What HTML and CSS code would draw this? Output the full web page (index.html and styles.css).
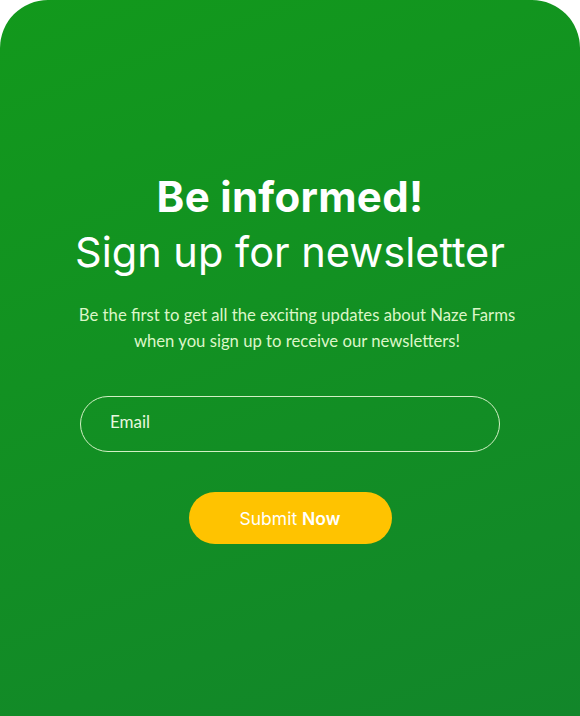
FILE: index.html
```html
<!DOCTYPE html>
<html lang="en">
<head>
<meta charset="utf-8">
<title>Newsletter</title>
<link rel="stylesheet" href="styles.css">
</head>
<body>
<section class="card">
  <h2 class="title"><strong>Be informed!</strong><span class="sub">Sign up for newsletter</span></h2>
  <p class="lead">Be the first to get all the exciting updates about Naze Farms when you sign up to receive our newsletters!</p>
  <form class="form">
    <input class="email" type="email" placeholder="Email">
    <button class="submit" type="button">Submit <b>Now</b></button>
  </form>
</section>
</body>
</html>
```

FILE: styles.css
```css
html, body {
  margin: 0;
  padding: 0;
  background: #ffffff;
}
body {
  overflow: hidden;
}
.card {
  box-sizing: border-box;
  width: 580px;
  height: 716px;
  border-radius: 48px 48px 0 0;
  background: linear-gradient(160deg, #12991c 0%, #12862a 100%);
  display: flex;
  flex-direction: column;
  align-items: center;
  padding-top: 172px;
}
.title {
  margin: 0;
  display: flex;
  flex-direction: column;
  align-items: center;
  color: #ffffff;
  font-family: Inter, "Noto Sans", sans-serif;
  font-weight: 400;
}
.title strong {
  font-size: 42px;
  line-height: 50px;
  font-weight: 700;
  letter-spacing: 0.3px;
}
.title .sub {
  font-size: 41.5px;
  line-height: 60px;
}
.lead {
  margin: 20px 0 0 14px;
  width: 470px;
  text-align: center;
  color: #dcf6c8;
  font-family: Lato, sans-serif;
  font-size: 16.7px;
  line-height: 26px;
}
.form {
  margin-top: 42px;
  display: flex;
  flex-direction: column;
  align-items: center;
  gap: 40px;
}
.email {
  box-sizing: border-box;
  width: 420px;
  height: 56px;
  border: 1px solid #d2f0c4;
  border-radius: 28px;
  background: transparent;
  padding: 0 29px 5px;
  font-family: Lato, sans-serif;
  font-size: 17px;
  color: #ffffff;
  outline: none;
}
.email::placeholder {
  color: #e8f7de;
  opacity: 1;
}
.submit {
  width: 203px;
  height: 52px;
  border: none;
  border-radius: 26px;
  background: #ffc300;
  color: #ffffff;
  font-family: Inter, "Noto Sans", sans-serif;
  font-size: 17.5px;
  font-weight: 400;
  cursor: pointer;
}
.submit b {
  font-weight: 600;
}
```
